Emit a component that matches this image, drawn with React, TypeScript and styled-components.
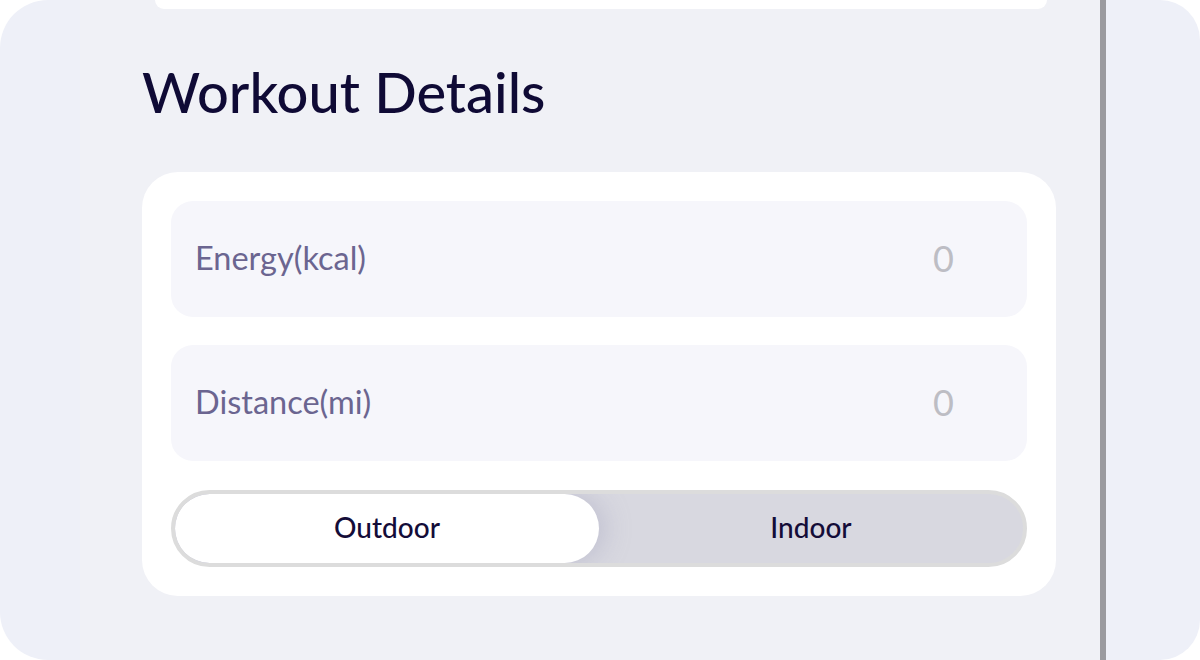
import React, { useState } from 'react';
import styled, { createGlobalStyle } from 'styled-components';

const GlobalStyle = createGlobalStyle`
  html, body {
    margin: 0;
    padding: 0;
    background: #ffffff;
  }
  body {
    font-family: Lato, "Noto Sans", sans-serif;
  }
`;

type FieldType = {
  label: string;
  value: string;
};

const fields: FieldType[] = [
  { label: 'Energy(kcal)', value: '0' },
  { label: 'Distance(mi)', value: '0' }
];

function App() {
  const [mode, setMode] = useState<'outdoor' | 'indoor'>('outdoor');

  return (
    <>
      <GlobalStyle />
      <Screen>
        <LeftStrip />
        <Main>
          <TopCardEdge />
          <Title>Workout Details</Title>
          <DetailsCard>
            {fields.map((f) => (
              <FieldRow key={f.label}>
                <FieldLabel>{f.label}</FieldLabel>
                <FieldValue>{f.value}</FieldValue>
              </FieldRow>
            ))}
            <Toggle>
              <ToggleOption active={mode === 'outdoor'} onClick={() => setMode('outdoor')}>
                Outdoor
              </ToggleOption>
              <ToggleOption active={mode === 'indoor'} onClick={() => setMode('indoor')}>
                Indoor
              </ToggleOption>
            </Toggle>
          </DetailsCard>
        </Main>
        <Divider />
        <RightPanel />
      </Screen>
    </>
  );
}

export default App;

const Screen = styled.div`
  display: flex;
  width: 1200px;
  height: 660px;
  overflow: hidden;
`;

const LeftStrip = styled.div`
  width: 80px;
  flex-shrink: 0;
  background: #eef0f8;
  border-radius: 48px 0 0 48px;
`;

const Main = styled.div`
  flex: 1;
  display: flex;
  flex-direction: column;
  background: #f0f1f6;
  padding-left: 62px;
  padding-right: 44px;
`;

const TopCardEdge = styled.div`
  height: 9px;
  margin: 0 9px 0 13px;
  background: #ffffff;
  border-radius: 0 0 30px 30px;
`;

const Title = styled.h1`
  margin: 49px 0 0 0;
  height: 74px;
  font-size: 56px;
  font-weight: 500;
  line-height: 68px;
  color: #0f0a35;
`;

const DetailsCard = styled.div`
  margin-top: 40px;
  display: flex;
  flex-direction: column;
  gap: 28px;
  padding: 29px;
  background: #ffffff;
  border-radius: 36px;
`;

const FieldRow = styled.div`
  display: flex;
  align-items: center;
  justify-content: space-between;
  height: 116px;
  padding: 0 73px 3px 24px;
  box-sizing: border-box;
  background: #f6f6fb;
  border-radius: 22px;
`;

const FieldLabel = styled.span`
  font-size: 32.5px;
  color: #6b6590;
`;

const FieldValue = styled.span`
  font-size: 36px;
  color: #bdbdc4;
`;

const Toggle = styled.div`
  display: flex;
  height: 77px;
  margin-top: 1px;
  box-sizing: border-box;
  border: 4px solid #dcdcdc;
  border-radius: 40px;
  background: #d8d8e0;
  overflow: hidden;
`;

const ToggleOption = styled.button<{ active: boolean }>`
  flex: 1;
  border: none;
  padding: 0 0 4px;
  cursor: pointer;
  font-family: Lato, "Noto Sans", sans-serif;
  font-size: 28px;
  font-weight: 500;
  color: #140c38;
  background: ${({ active }) => (active ? '#ffffff' : 'transparent')};
  border-radius: 36px;
  box-shadow: ${({ active }) => (active ? '6px 0 26px rgba(150, 150, 180, 0.35)' : 'none')};
  position: relative;
  z-index: ${({ active }) => (active ? 1 : 0)};
`;

const Divider = styled.div`
  width: 6px;
  flex-shrink: 0;
  background: #9a9a9f;
`;

const RightPanel = styled.div`
  width: 94px;
  flex-shrink: 0;
  background: #eef0f8;
  border-radius: 0 40px 40px 0;
`;
